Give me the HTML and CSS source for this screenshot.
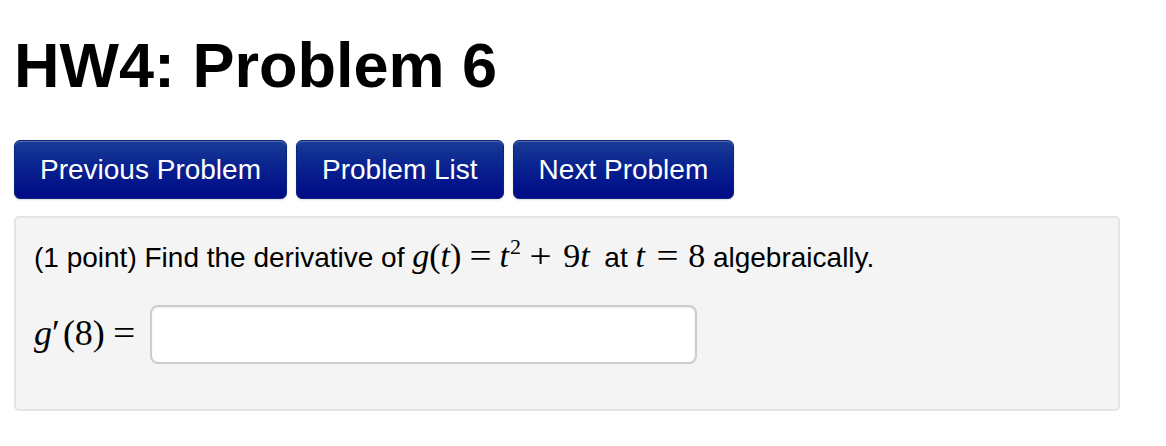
FILE: index.html
```html
<!DOCTYPE html>
<html lang="en">
<head>
<meta charset="utf-8">
<title>HW4: Problem 6</title>
<link rel="stylesheet" href="styles.css">
</head>
<body>
<main class="page">
  <h1 class="title">HW4: Problem 6</h1>
  <nav class="nav">
    <a class="btn" href="#">Previous Problem</a>
    <a class="btn" href="#">Problem List</a>
    <a class="btn" href="#">Next Problem</a>
  </nav>
  <section class="well">
    <p class="question">(1 point) Find the derivative of <span class="math math-a"><span class="mi">g</span><span class="mn">(</span><span class="mi">t</span><span class="mn">)</span><span class="mo mo-eq1">=</span><span class="mi">t</span><sup class="sup">2</sup><span class="mo mo-plus">+</span><span class="mn">9</span><span class="mi">t</span></span> at <span class="math"><span class="mi">t</span><span class="mo mo-eq2">=</span><span class="mn">8</span></span> algebraically.</p>
    <div class="answer-row">
      <label class="math answer-label" for="ans"><span class="mi">g</span><span class="prime">′</span><span class="mn">(8)</span><span class="mo mo-eq3">=</span></label>
      <input class="answer" id="ans" type="text">
    </div>
  </section>
</main>
</body>
</html>
```

FILE: styles.css
```css
* { box-sizing: border-box; }

body {
  margin: 0;
  background: #ffffff;
  color: #000000;
  font-family: "Liberation Sans", Arial, Helvetica, sans-serif;
}

.page {
  padding: 31px 46px 0 14px;
}

.title {
  margin: 0;
  font-size: 63px;
  line-height: 69px;
  font-weight: bold;
}

.nav {
  display: flex;
  gap: 9px;
  margin-top: 40px;
}

.btn {
  display: flex;
  align-items: center;
  height: 59px;
  padding: 0 25px;
  border: 1px solid #0a237d;
  border-radius: 6px;
  background: linear-gradient(to bottom, #1a3c97 0%, #0a2590 40%, #000a86 100%);
  box-shadow: inset 0 1px 0 rgba(255, 255, 255, 0.25), 0 1px 2px rgba(0, 0, 0, 0.15);
  color: #ffffff;
  font-size: 28px;
  text-decoration: none;
}

.well {
  margin-top: 17px;
  padding: 18px 18px 20px 18px;
  border: 2px solid #e4e4e4;
  border-radius: 5px;
  background: #f4f4f4;
  min-height: 195px;
}

.question {
  margin: 0;
  font-size: 28px;
  line-height: 40px;
}

.math {
  font-family: "Liberation Serif", "Times New Roman", serif;
  font-size: 34px;
}

.math-a { padding-right: 7px; }

.mi { font-style: italic; }

.mo {
  display: inline-block;
  transform: scaleX(1.15);
}

.mo-eq1 { margin: 0 9px 0 10px; }
.mo-plus { margin: 0 13px 0 10px; }
.mo-eq2 { margin: 0 11px 0 13px; }
.mo-eq3 { margin: 0 0 0 9px; transform: scaleX(1.1); }

.sup {
  font-size: 22px;
  vertical-align: 0;
  position: relative;
  top: -13px;
  margin-left: 1px;
}

.prime { margin-right: 3px; }

.answer-row {
  display: flex;
  align-items: center;
  gap: 16px;
  margin-top: 25px;
}

.answer-label {
  font-size: 36px;
  line-height: 40px;
  padding-bottom: 3px;
}

.answer {
  width: 547px;
  height: 59px;
  border: 2px solid #cccccc;
  border-radius: 8px;
  background: #ffffff;
  box-shadow: inset 0 1px 2px rgba(0, 0, 0, 0.07);
  font-size: 26px;
  padding: 0 12px;
}
```
